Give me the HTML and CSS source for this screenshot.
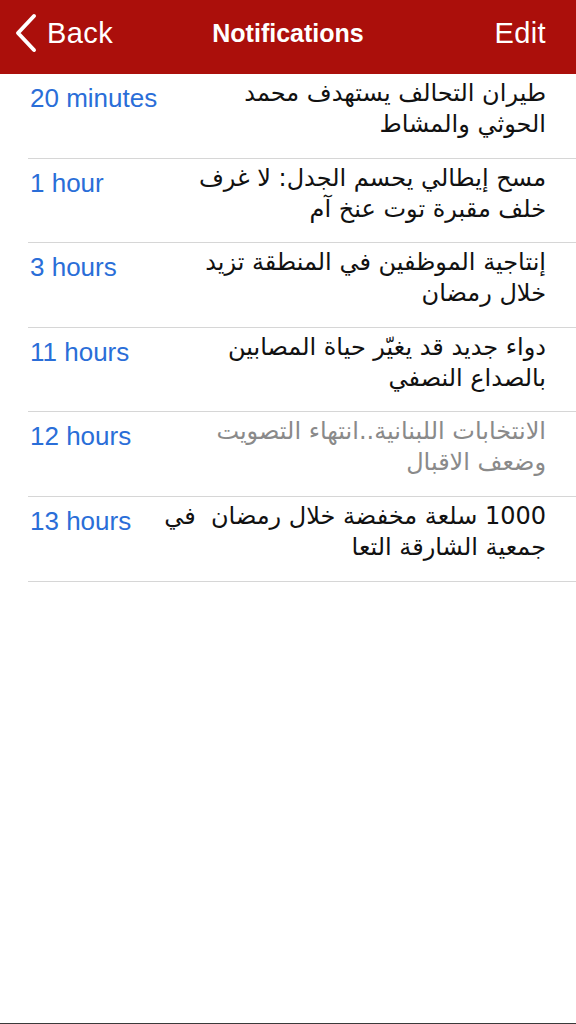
FILE: index.html
```html
<!DOCTYPE html>
<html lang="en">
<head>
<meta charset="utf-8">
<title>Notifications</title>
<link rel="stylesheet" href="styles.css">
</head>
<body>
<div class="screen">
  <header class="navbar">
    <div class="nav-left">
      <svg class="chev" width="24" height="40" viewBox="0 0 24 40"><path d="M20 3 L4 20 L20 37" fill="none" stroke="#fff" stroke-width="4" stroke-linecap="round" stroke-linejoin="round"/></svg>
      <span class="nav-btn">Back</span>
    </div>
    <div class="nav-title">Notifications</div>
    <div class="nav-right"><span class="nav-btn">Edit</span></div>
  </header>
  <main class="list">
    <div class="row">
      <div class="time">20 minutes</div>
      <div class="title" dir="rtl">طيران التحالف يستهدف محمد<br>الحوثي والمشاط</div>
    </div>
    <div class="row">
      <div class="time">1 hour</div>
      <div class="title" dir="rtl">مسح إيطالي يحسم الجدل: لا غرف<br>خلف مقبرة توت عنخ آم</div>
    </div>
    <div class="row">
      <div class="time">3 hours</div>
      <div class="title" dir="rtl">إنتاجية الموظفين في المنطقة تزيد<br>خلال رمضان</div>
    </div>
    <div class="row">
      <div class="time">11 hours</div>
      <div class="title" dir="rtl">دواء جديد قد يغيّر حياة المصابين<br>بالصداع النصفي</div>
    </div>
    <div class="row">
      <div class="time">12 hours</div>
      <div class="title read" dir="rtl">الانتخابات اللبنانية..انتهاء التصويت<br>وضعف الاقبال</div>
    </div>
    <div class="row">
      <div class="time">13 hours</div>
      <div class="title" dir="rtl">1000 سلعة مخفضة خلال رمضان&nbsp; في<br>جمعية الشارقة التعا</div>
    </div>
  </main>
  <footer class="bottom-edge"></footer>
</div>
</body>
</html>
```
FILE: styles.css
```css
html, body {
  margin: 0;
  padding: 0;
  background: #ffffff;
}
.screen {
  width: 576px;
  height: 1024px;
  display: flex;
  flex-direction: column;
  font-family: "Liberation Sans", Arial, sans-serif;
  overflow: hidden;
}
.navbar {
  height: 74px;
  flex: none;
  background: #ab0f0b;
  color: #ffffff;
  display: flex;
  align-items: center;
  justify-content: space-between;
  padding: 0 30px 8px 14px;
  box-sizing: border-box;
  position: relative;
}
.nav-left {
  display: flex;
  align-items: center;
  gap: 9px;
}
.chev {
  display: block;
}
.nav-btn {
  font-size: 29px;
  line-height: 34px;
  letter-spacing: 0.4px;
}
.nav-title {
  font-size: 25px;
  font-weight: bold;
  position: absolute;
  left: 0;
  right: 0;
  text-align: center;
  top: 19px;
  pointer-events: none;
}
.list {
  flex: 1;
}
.row {
  display: flex;
  justify-content: space-between;
  align-items: flex-start;
  margin-left: 28px;
  padding: 4px 30px 0 2px;
  border-bottom: 1px solid #d6d6d6;
  box-sizing: border-box;
  height: 84.6px;
}
.time {
  color: #2a6ed8;
  font-size: 26px;
  line-height: 36px;
  padding-top: 2px;
  white-space: nowrap;
}
.title {
  font-family: "DejaVu Sans", sans-serif;
  font-size: 24px;
  line-height: 31px;
  color: #111111;
  text-align: right;
  white-space: nowrap;
}
.title.read {
  color: #8a8a8a;
}
.bottom-edge {
  height: 1px;
  flex: none;
  background: #3a3a3a;
}
```
